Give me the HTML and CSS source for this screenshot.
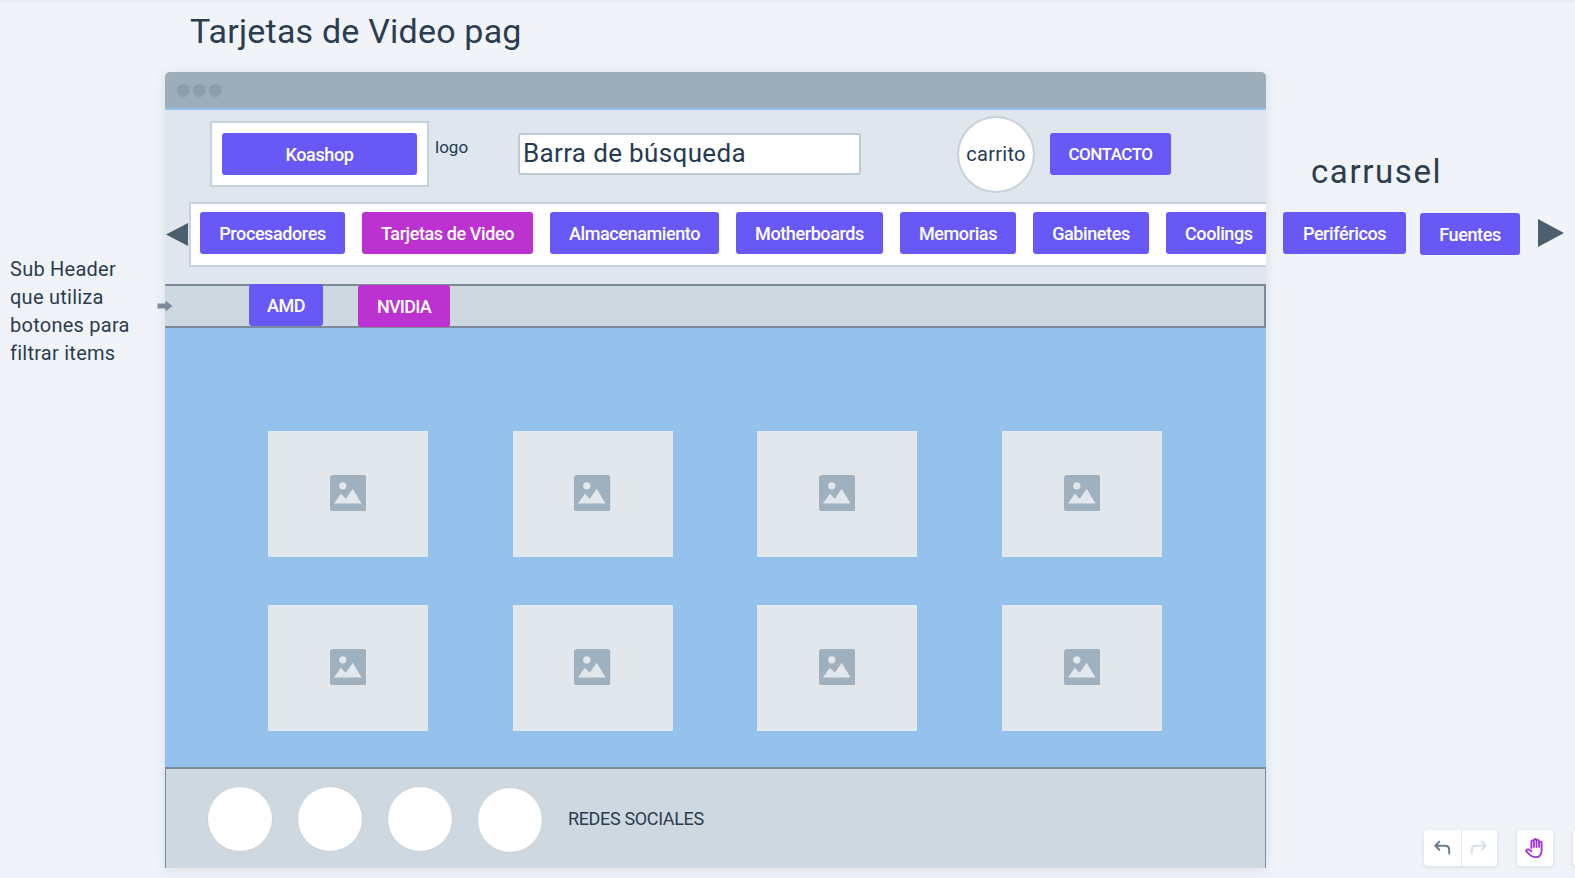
FILE: index.html
```html
<!DOCTYPE html>
<html lang="en">
<head>
    <meta charset="UTF-8">
    <title>Tarjetas de Video pag</title>
    <link rel="stylesheet" href="styles.css">
</head>
<body>
    <svg class="defs" width="0" height="0">
        <symbol id="picture" viewBox="0 0 37 37">
            <rect width="37" height="37" rx="3" fill="#9fb0be"/>
            <circle cx="13" cy="11" r="3.7" fill="#e2e7ec"/>
            <path d="M4 29 L11 19 L16 24 L23 14 L32 29 Z" fill="#e2e7ec"/>
        </symbol>
    </svg>

    <div class="canvas">
        <h1 class="label title">Tarjetas de Video pag</h1>
        <div class="label carousel-label">carrusel</div>
        <div class="label note">Sub Header<br>que utiliza<br>botones para<br>filtrar items</div>

        <!-- wireframe window -->
        <div class="frame">
            <div class="titlebar">
                <span class="dot"></span>
                <span class="dot"></span>
                <span class="dot"></span>
            </div>

            <div class="header">
                <div class="brand"><button class="btn brand-btn">Koashop</button></div>
                <span class="logo-text">logo</span>
                <div class="search">Barra de búsqueda</div>
                <div class="cart">carrito</div>
                <button class="btn contact">CONTACTO</button>
            </div>

            <div class="nav">
                <button class="btn">Procesadores</button>
                <button class="btn active">Tarjetas de Video</button>
                <button class="btn">Almacenamiento</button>
                <button class="btn">Motherboards</button>
                <button class="btn">Memorias</button>
                <button class="btn">Gabinetes</button>
                <button class="btn cut">Coolings</button>
            </div>

            <div class="subheader">
                <button class="btn amd">AMD</button>
                <button class="btn active nvidia">NVIDIA</button>
            </div>

            <div class="content">
                <div class="card"><svg class="pic"><use href="#picture"/></svg></div>
                <div class="card"><svg class="pic"><use href="#picture"/></svg></div>
                <div class="card"><svg class="pic"><use href="#picture"/></svg></div>
                <div class="card"><svg class="pic"><use href="#picture"/></svg></div>
                <div class="card"><svg class="pic"><use href="#picture"/></svg></div>
                <div class="card"><svg class="pic"><use href="#picture"/></svg></div>
                <div class="card"><svg class="pic"><use href="#picture"/></svg></div>
                <div class="card"><svg class="pic"><use href="#picture"/></svg></div>
            </div>

            <div class="footer">
                <span class="social"></span>
                <span class="social"></span>
                <span class="social"></span>
                <span class="social social-last"></span>
                <span class="social-text">REDES SOCIALES</span>
            </div>
        </div>

        <!-- pieces lying loose on the canvas -->
        <svg class="arrow arrow-left" viewBox="0 0 22 23"><path d="M22 0 V23 L0 11.5 Z"/></svg>
        <svg class="arrow arrow-right" viewBox="0 0 26 28"><path d="M0 0 V28 L26 14 Z"/></svg>
        <svg class="pointer" viewBox="0 0 15 12"><path d="M0 3.5 H8 V0.5 L15 6 L8 11.5 V8.5 H0 Z"/></svg>
        <button class="btn loose perifericos">Periféricos</button>
        <button class="btn loose fuentes">Fuentes</button>

        <div class="toolbar">
            <div class="tool-group">
                <div class="tool">
                    <svg viewBox="0 0 20 20" class="tool-icon undo"><path d="M7 3 L2.5 7.5 L7 12 M3 7.5 H13 Q18 7.5 18 12 V16"/></svg>
                </div>
                <div class="tool tool-split">
                    <svg viewBox="0 0 20 20" class="tool-icon redo"><path d="M13 3 L17.5 7.5 L13 12 M17 7.5 H7 Q2 7.5 2 12 V16"/></svg>
                </div>
            </div>
            <div class="tool-group tool-hand">
                <svg viewBox="0 0 24 24" class="tool-icon hand"><path d="M8 12 V5 a1.4 1.4 0 0 1 2.8 0 V3.6 a1.4 1.4 0 0 1 2.8 0 V4.6 a1.4 1.4 0 0 1 2.8 0 V6.4 a1.4 1.4 0 0 1 2.8 0 V15 C19.2 19.5 16.5 22 13 22 C9 22 7 20.5 5 18 L2.4 15.6 C1.8 14.2 4.4 12.6 6.4 14.4 L8 15.6 M10.8 5 V11 M13.6 4 V11 M16.4 5 V11"/></svg>
            </div>
            <div class="tool-group tool-edge"></div>
        </div>
    </div>
</body>
</html>
```

FILE: styles.css
```css
* {
    box-sizing: border-box;
}

html, body {
    margin: 0;
    height: 100%;
    overflow: hidden;
}

body {
    font-family: "Roboto", "Liberation Sans", sans-serif;
    color: #243b53;
    background-color: #f0f4f8;
}

.defs {
    display: block;
}

.canvas {
    position: relative;
    width: 1575px;
    height: 878px;
    border-top: 2px solid #e9edf1;
    overflow: hidden;
}

.label {
    position: absolute;
    margin: 0;
    font-weight: 400;
    color: #2b3d50;
}

.title {
    left: 190px;
    top: 7px;
    font-size: 34px;
    line-height: 44px;
    letter-spacing: 0.2px;
}

.carousel-label {
    left: 1311px;
    top: 150px;
    font-size: 33px;
    line-height: 40px;
    letter-spacing: 1.6px;
}

.note {
    left: 10px;
    top: 253px;
    font-size: 20px;
    line-height: 28px;
    letter-spacing: 0.25px;
}

/* window */
.frame {
    position: absolute;
    left: 165px;
    top: 70px;
    width: 1101px;
    height: 796px;
    background-color: #dfe6ee;
    border-radius: 5px 5px 0 0;
    box-shadow: 0 2px 12px rgba(98, 125, 152, 0.18);
    overflow: hidden;
}

.titlebar {
    display: flex;
    align-items: center;
    gap: 3px;
    height: 38px;
    padding-left: 12px;
    background-color: #9dadba;
    border-bottom: 2px solid #94c2ec;
}

.dot {
    width: 13px;
    height: 13px;
    border-radius: 50%;
    background-color: #8d9dac;
}

.btn {
    height: 42px;
    padding: 0;
    border: none;
    border-radius: 3px;
    font-family: inherit;
    font-size: 18px;
    font-weight: 500;
    letter-spacing: -0.4px;
    color: #fff;
    background-color: #6859f7;
}

.active {
    background-color: #bc32d0;
}

/* header */
.header {
    display: flex;
    align-items: center;
    height: 88px;
    padding-left: 45px;
}

.brand {
    display: flex;
    align-items: center;
    justify-content: center;
    width: 219px;
    height: 66px;
    background-color: #fff;
    border: 2px solid #c5d1dc;
}

.brand-btn {
    width: 195px;
}

.logo-text {
    align-self: flex-start;
    width: 83px;
    margin: 26px 0 0 6px;
    font-size: 17px;
    line-height: 22px;
}

.search {
    width: 343px;
    height: 42px;
    padding-left: 3px;
    font-size: 26px;
    line-height: 36px;
    letter-spacing: 0.35px;
    background-color: #fff;
    border: 2px solid #bcc9d6;
    border-radius: 3px;
}

.cart {
    display: flex;
    align-items: center;
    justify-content: center;
    flex: none;
    width: 78px;
    height: 77px;
    margin-left: 96px;
    font-size: 20px;
    letter-spacing: 0.3px;
    background-color: #fff;
    border: 2px solid #c5d1dc;
    border-radius: 50%;
}

.contact {
    width: 121px;
    margin-left: 15px;
    font-size: 17px;
    letter-spacing: -0.5px;
}

/* category nav */
.nav {
    display: grid;
    grid-template-columns: 145px 171px 169px 147px 116px 116px 119px;
    column-gap: 17px;
    height: 65px;
    margin: 4px 0 0 24px;
    padding: 8px 0 0 9px;
    background-color: #fff;
    border: 2px solid #c5d1dc;
    border-right: none;
    overflow: hidden;
}

.cut {
    padding-left: 19px;
    text-align: left;
}

/* filter bar */
.subheader {
    display: flex;
    align-items: flex-start;
    gap: 35px;
    height: 44px;
    margin-top: 17px;
    padding-left: 84px;
    background-color: #ced8e1;
    border: solid #7b8b9a;
    border-width: 2px 2px 2px 0;
}

.amd {
    width: 74px;
    margin-top: -2px;
}

.nvidia {
    width: 92px;
    margin-top: -1px;
    letter-spacing: -0.7px;
}

/* product grid */
.content {
    display: grid;
    grid-template-columns: repeat(4, 160px);
    grid-auto-rows: 126px;
    column-gap: 84.7px;
    row-gap: 48px;
    height: 439px;
    padding: 103px 0 0 103px;
    background-color: #94c2ec;
}

.card {
    display: flex;
    align-items: center;
    justify-content: center;
    background-color: #e2e7ec;
}

.pic {
    width: 36.5px;
    height: 36.5px;
    margin: 0 0.5px 2px 0;
}

/* footer */
.footer {
    display: flex;
    align-items: center;
    gap: 24px;
    height: 101px;
    padding-left: 41px;
    background-color: #ced8e1;
    border: solid #7b8b9a;
    border-width: 2px 1px 0 1px;
}

.social {
    width: 66px;
    height: 66px;
    background-color: #fff;
    border: 1px solid #c5d1dc;
    border-radius: 50%;
}

.social-last {
    margin-top: 2px;
}

.social-text {
    margin-left: 1px;
    font-size: 18px;
    letter-spacing: -0.35px;
    color: #2b3d50;
}

/* loose pieces */
.arrow {
    position: absolute;
    fill: #4b5f70;
}

.arrow-left {
    left: 166px;
    top: 221px;
    width: 22px;
    height: 23px;
}

.arrow-right {
    left: 1538px;
    top: 217px;
    width: 26px;
    height: 28px;
}

.pointer {
    position: absolute;
    left: 157px;
    top: 298px;
    width: 16px;
    height: 12px;
    fill: #7b8b9a;
}

.loose {
    position: absolute;
}

.perifericos {
    left: 1283px;
    top: 210px;
    width: 123px;
}

.fuentes {
    left: 1420px;
    top: 211px;
    width: 100px;
}

/* bottom right tools */
.toolbar {
    position: absolute;
    left: 1424px;
    top: 828px;
    display: flex;
    gap: 20px;
}

.tool-group {
    display: flex;
    height: 36px;
    background-color: #fff;
    border-radius: 4px;
    box-shadow: 0 1px 4px rgba(98, 125, 152, 0.2);
}

.tool {
    display: flex;
    align-items: center;
    justify-content: center;
    width: 36.5px;
}

.tool-split {
    border-left: 1px solid #e4e9ee;
}

.tool-hand {
    align-items: center;
    justify-content: center;
    width: 36px;
}

.tool-edge {
    width: 36px;
}

.tool-icon {
    width: 18px;
    height: 18px;
    fill: none;
    stroke-width: 2.2;
    stroke-linecap: round;
    stroke-linejoin: round;
}

.undo {
    stroke: #6b7e8f;
}

.redo {
    stroke: #d9e0e6;
}

.hand {
    width: 22px;
    height: 22px;
    stroke: #a033dd;
    stroke-width: 2;
}
```
